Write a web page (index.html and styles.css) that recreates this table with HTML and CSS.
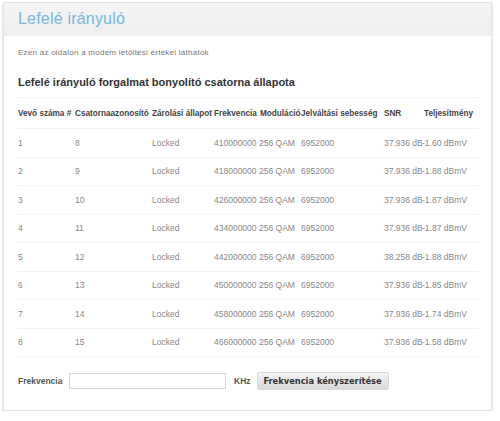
FILE: index.html
```html
<!DOCTYPE html>
<html lang="hu">
<head>
<meta charset="utf-8">
<title>Lefelé irányuló</title>
<link rel="stylesheet" href="styles.css">
</head>
<body>
<div class="card">
  <div class="card-head">
    <h1 class="title">Lefelé irányuló</h1>
  </div>
  <div class="card-body">
    <p class="intro">Ezen az oldalon a modem letöltési értékei láthatók</p>
    <h2 class="subtitle">Lefelé irányuló forgalmat bonyolító csatorna állapota</h2>
    <div class="table">
      <div class="row head">
        <span>Vevő száma #</span><span>Csatornaazonosító</span><span>Zárolási állapot</span><span>Frekvencia</span><span class="mod">Moduláció</span><span>Jelváltási sebesség</span><span>SNR</span><span class="pw">Teljesítmény</span>
      </div>
      <div class="row"><span>1</span><span>8</span><span>Locked</span><span>410000000</span><span>256 QAM</span><span>6952000</span><span>37.936 dB</span><span>-1.60 dBmV</span></div>
      <div class="row"><span>2</span><span>9</span><span>Locked</span><span>418000000</span><span>256 QAM</span><span>6952000</span><span>37.936 dB</span><span>-1.88 dBmV</span></div>
      <div class="row"><span>3</span><span>10</span><span>Locked</span><span>426000000</span><span>256 QAM</span><span>6952000</span><span>37.936 dB</span><span>-1.87 dBmV</span></div>
      <div class="row"><span>4</span><span>11</span><span>Locked</span><span>434000000</span><span>256 QAM</span><span>6952000</span><span>37.936 dB</span><span>-1.87 dBmV</span></div>
      <div class="row"><span>5</span><span>12</span><span>Locked</span><span>442000000</span><span>256 QAM</span><span>6952000</span><span>38.258 dB</span><span>-1.88 dBmV</span></div>
      <div class="row"><span>6</span><span>13</span><span>Locked</span><span>450000000</span><span>256 QAM</span><span>6952000</span><span>37.936 dB</span><span>-1.85 dBmV</span></div>
      <div class="row"><span>7</span><span>14</span><span>Locked</span><span>458000000</span><span>256 QAM</span><span>6952000</span><span>37.936 dB</span><span>-1.74 dBmV</span></div>
      <div class="row"><span>8</span><span>15</span><span>Locked</span><span>466000000</span><span>256 QAM</span><span>6952000</span><span>37.936 dB</span><span>-1.58 dBmV</span></div>
    </div>
    <div class="form-row">
      <label class="label" for="freq">Frekvencia</label>
      <input class="input" id="freq" type="text">
      <span class="unit">KHz</span>
      <button class="btn" type="button">Frekvencia kényszerítése</button>
    </div>
  </div>
</div>
</body>
</html>
```

FILE: styles.css
```css
html, body {
  margin: 0;
  padding: 0;
  background: #ffffff;
}
body {
  font-family: "Liberation Sans", Arial, sans-serif;
  padding: 2px 0 0 3px;
}
.card {
  width: 487px;
  height: 407px;
  border: 1px solid #e2e2e2;
  background: #fff;
  box-shadow: 0 2px 3px rgba(0, 0, 0, 0.18);
}
.card-head {
  height: 32px;
  background: linear-gradient(#f5f5f5, #eeeeee);
  border-bottom: 1px solid #f2f2f2;
  display: flex;
  align-items: center;
  padding-left: 14px;
}
.title {
  margin: 0;
  font-weight: normal;
  font-size: 16px;
  color: #78b8dd;
  letter-spacing: 0.2px;
}
.card-body {
  padding: 0 14px;
}
.intro {
  margin: 11px 0 0;
  font-size: 8px;
  letter-spacing: 0.25px;
  line-height: 12px;
  color: #777;
}
.subtitle {
  margin: 16px 0 0;
  font-size: 11px;
  line-height: 14px;
  color: #333;
  font-weight: bold;
}
.table {
  margin-top: 8px;
  width: 460px;
  border-top: 1px solid #f0f0f0;
}
.row {
  display: grid;
  grid-template-columns: 57px 77px 62px 45px 42px 83px 38px 56px;
  align-items: center;
  height: 28.5px;
  border-bottom: 1px solid #f0f0f0;
  box-sizing: border-box;
  font-size: 8.5px;
  color: #888;
  white-space: nowrap;
}
.row.head {
  height: 31px;
  font-weight: bold;
  font-size: 8.2px;
  color: #444;
}
.row.head .mod {
  padding-left: 1px;
}
.row.head .pw {
  padding-left: 2px;
}
.form-row {
  margin-top: 15px;
  display: flex;
  align-items: center;
  height: 18px;
}
.label {
  font-size: 8.5px;
  font-weight: bold;
  color: #555;
  width: 51px;
}
.input {
  width: 157px;
  height: 16px;
  box-sizing: border-box;
  border: 1px solid #d6d6d6;
  margin: 0;
  padding: 0;
}
.unit {
  font-size: 8.5px;
  font-weight: bold;
  color: #555;
  margin-left: 8px;
}
.btn {
  margin-left: 6px;
  height: 18px;
  width: 132px;
  padding: 0;
  border: 1px solid #dadada;
  border-radius: 2px;
  background: linear-gradient(#f4f4f4, #d9d9d9);
  font-family: "DejaVu Sans", Verdana, sans-serif;
  font-weight: bold;
  font-size: 8.3px;
  color: #333;
}
```
